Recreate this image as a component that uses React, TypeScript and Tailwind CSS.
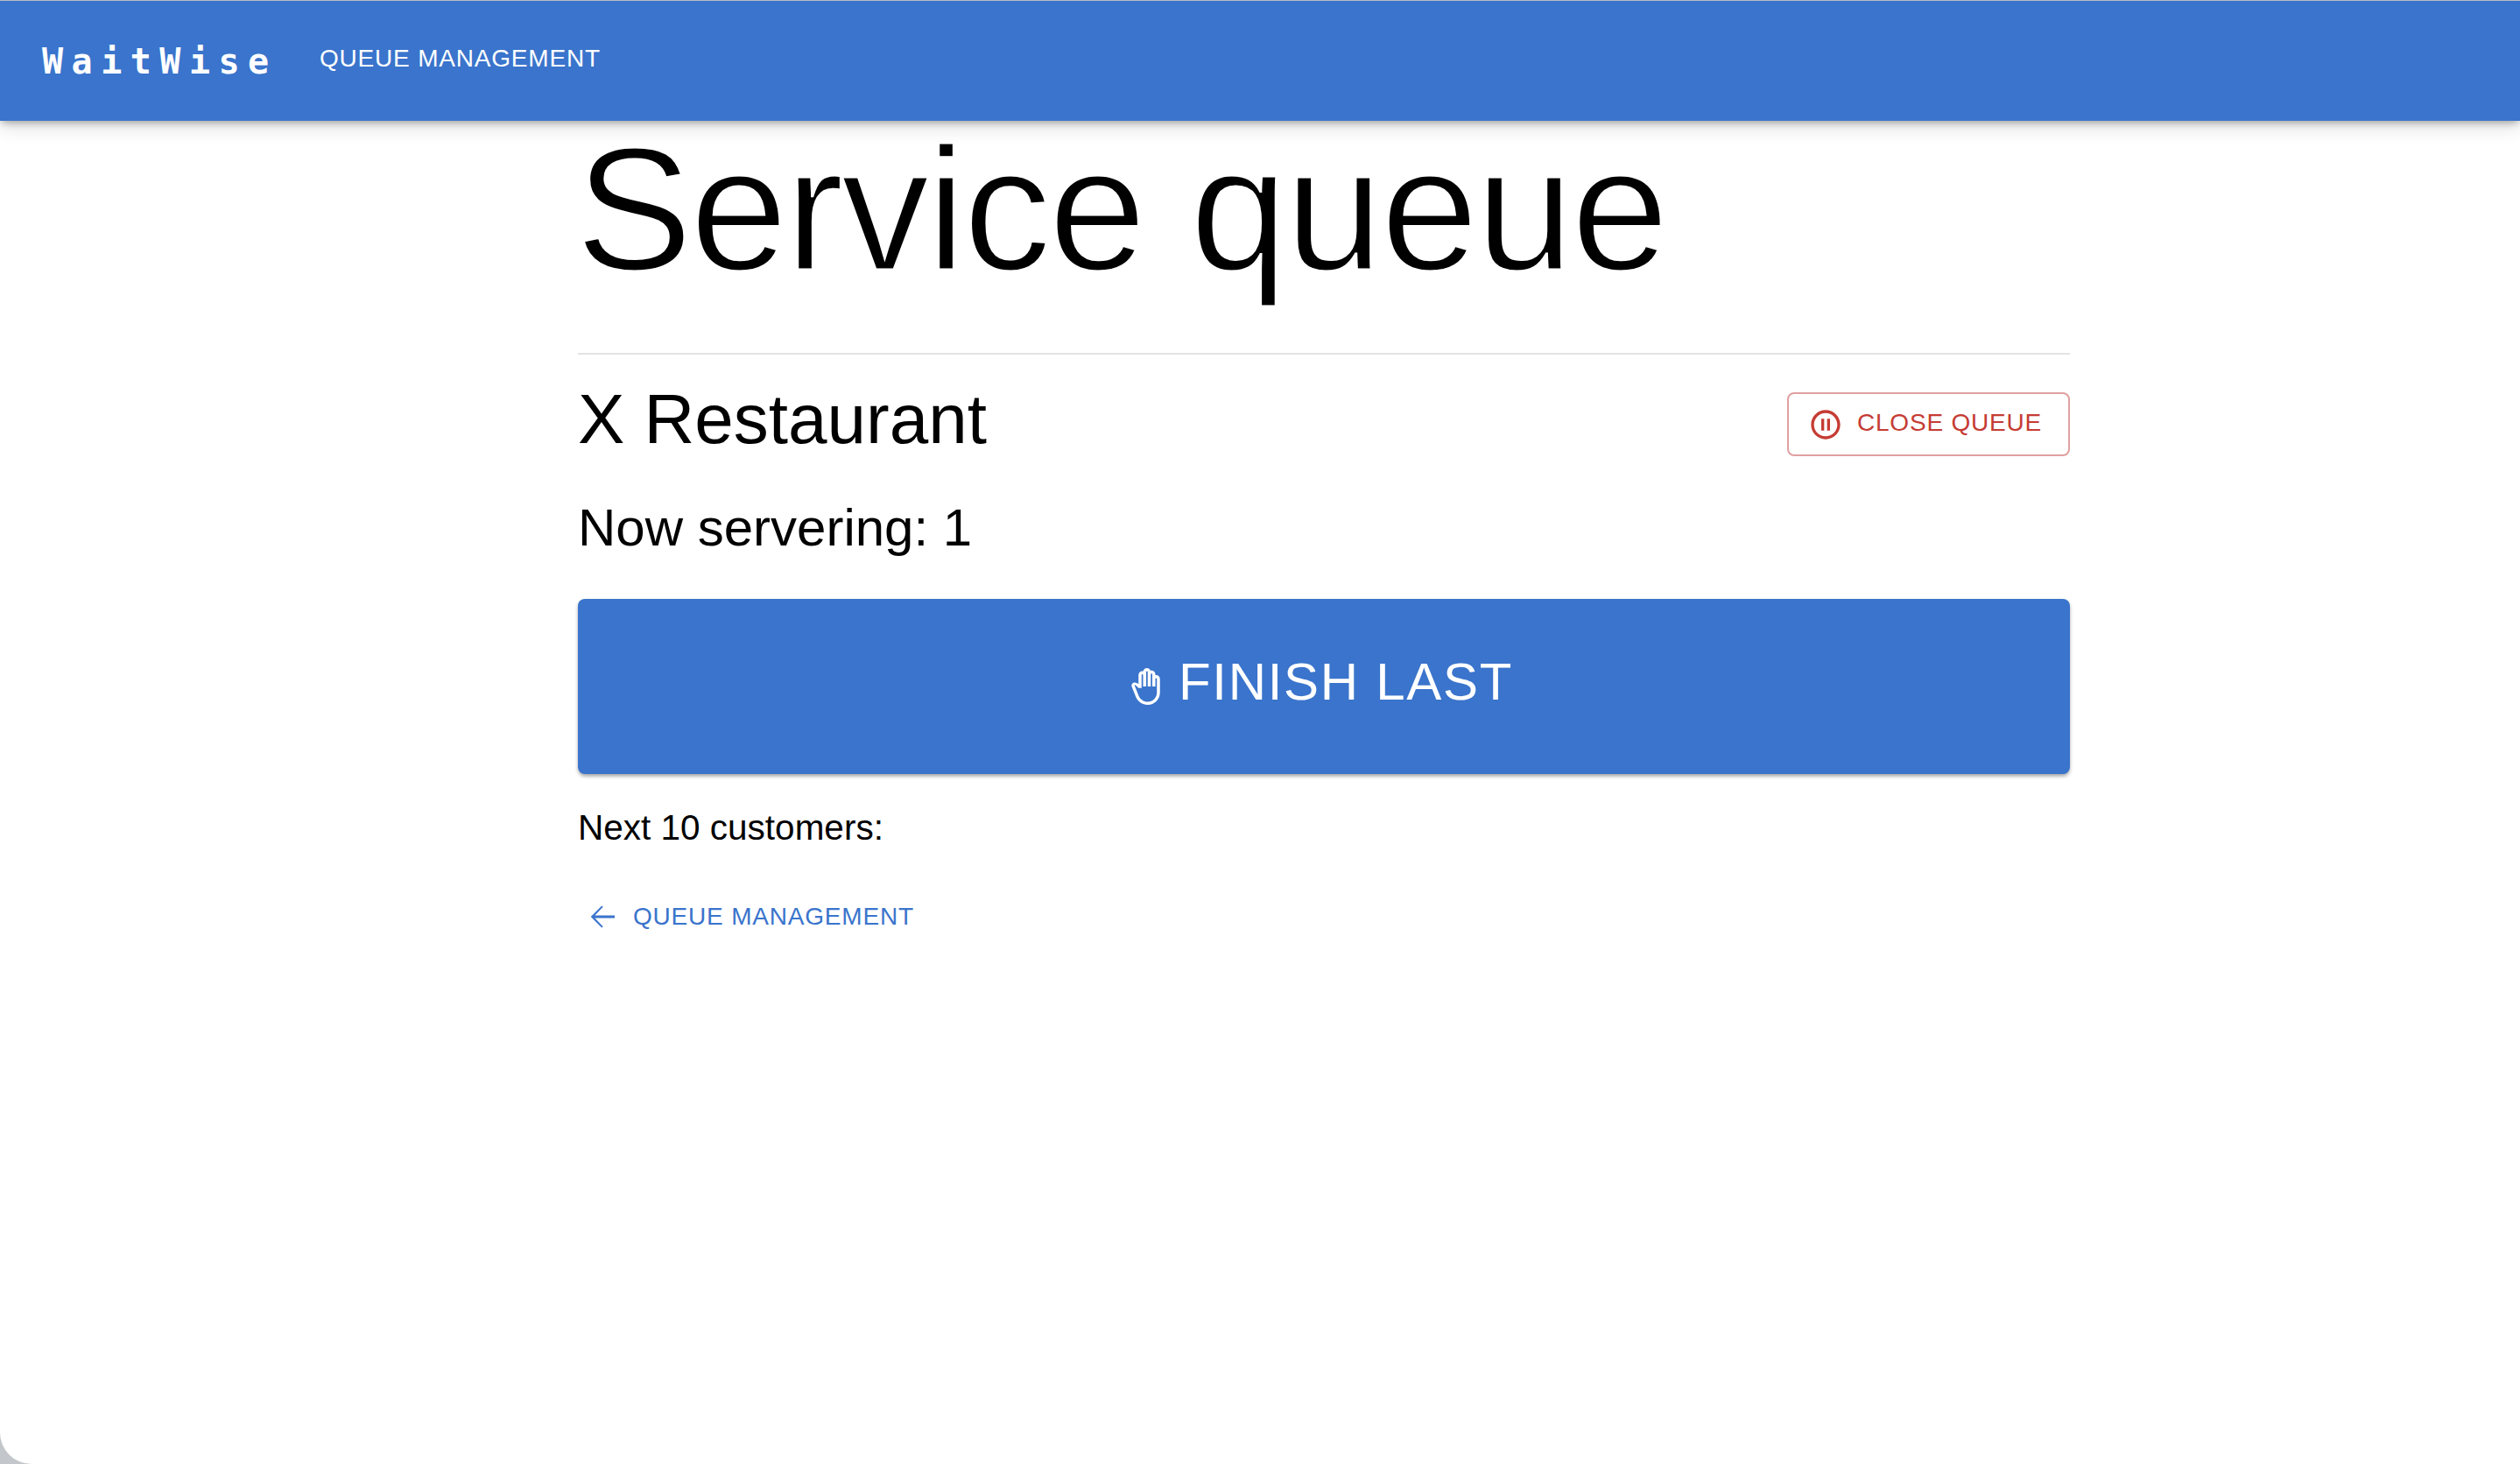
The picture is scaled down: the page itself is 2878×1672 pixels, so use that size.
const SANS = "font-['Liberation_Sans',Arial,sans-serif]";

function PauseCircle() {
  return (
    <svg viewBox="0 0 24 24" className="w-10 h-10 fill-current">
      <path d="M9 16h2V8H9v8zm3-14C6.48 2 2 6.48 2 12s4.48 10 10 10 10-4.48 10-10S17.52 2 12 2zm0 18c-4.41 0-8-3.59-8-8s3.59-8 8-8 8 3.59 8 8-3.59 8-8 8zm1-4h2V8h-2v8z" />
    </svg>
  );
}

function PanTool() {
  return (
    <svg viewBox="0 0 24 24" className="w-[42px] h-[42px] fill-current">
      <path d="M21 7c0-1.38-1.12-2.5-2.5-2.5-.17 0-.34.02-.5.05V4c0-1.38-1.12-2.5-2.5-2.5-.23 0-.46.03-.67.09C14.46.66 13.56 0 12.5 0c-1.23 0-2.25.89-2.46 2.06C9.87 2.02 9.69 2 9.5 2 8.12 2 7 3.12 7 4.5v5.89c-.34-.31-.76-.54-1.22-.66L5 9.52c-.83-.23-1.7.09-2.19.83-.38.57-.4 1.31-.15 1.95l2.56 6.43C6.49 21.91 9.57 24 13 24c4.42 0 8-3.58 8-8V7zm-2 9c0 3.31-2.69 6-6 6-2.61 0-4.95-1.59-5.91-4.01l-2.6-6.54c-.08-.2.06-.39.25-.45.13-.04.28.02.35.14L7 13h2V4.5c0-.28.22-.5.5-.5s.5.22.5.5V12h2V2.5c0-.28.22-.5.5-.5s.5.22.5.5V12h2V4c0-.28.22-.5.5-.5s.5.22.5.5v8h2V7c0-.28.22-.5.5-.5s.5.22.5.5v9z" />
    </svg>
  );
}

function ArrowBack() {
  return (
    <svg viewBox="0 0 24 24" className="w-[42px] h-[42px] fill-current">
      <path d="M20 11.2H7.1l5.3-5.6L11.6 4.8 4.4 12l7.2 7.2.8-.8-5.3-5.6H20v-1.6z" />
    </svg>
  );
}

export default function App() {
  return (
    <div className={"h-screen overflow-hidden bg-[#c3c6ca] " + SANS}>
      <div className="h-full bg-white rounded-bl-[36px] overflow-hidden">
        <header className="h-[138px] border-t border-[#b9bcc2] bg-[#3a74cc] text-white flex items-center px-12 shadow-[0_4px_8px_-2px_rgba(0,0,0,0.3),0_8px_20px_0_rgba(0,0,0,0.12)] relative">
          <span className="font-['DejaVu_Sans_Mono',monospace] font-bold text-[40px] tracking-[9.5px] w-[317px] shrink-0">WaitWise</span>
          <span className="text-[28px] tracking-[0.8px] -mt-[6px]">QUEUE MANAGEMENT</span>
        </header>
        <main className="w-[1704px] ml-[660px] text-black">
          <h1 className="text-[201px] tracking-[-3px] leading-none h-[265px] -ml-[3px] [-webkit-text-stroke:3px_white]">Service queue</h1>
          <div className="border-t-2 border-[#e3e3e3]" />
          <div className="flex justify-between items-start">
            <h2 className="text-[80px] leading-[90px] mt-[29px]">X Restaurant</h2>
            <button className="mt-[43px] h-[73px] w-[323px] border-2 border-[#e0a0a0] rounded-[8px] text-[#c53c34] flex items-center justify-center gap-4 pr-[8px] text-[28px] tracking-[0.8px]">
              <PauseCircle />
              <span className="-mt-[3px]">CLOSE QUEUE</span>
            </button>
          </div>
          <p className="text-[60px] leading-[70px] mt-[44px]">Now servering: 1</p>
          <button className="mt-[46px] w-full h-[200px] rounded-[8px] bg-[#3a74cc] text-white flex items-center justify-center gap-4 pr-[8px] text-[60px] tracking-[1.7px] shadow-[0_3px_4px_-1px_rgba(0,0,0,0.3),0_2px_5px_0_rgba(0,0,0,0.14)]">
            <PanTool />
            <span className="-mt-[10px]">FINISH LAST</span>
          </button>
          <p className="text-[40.5px] leading-[50px] mt-[36px]">Next 10 customers:</p>
          <button className="mt-[56px] flex items-center gap-[14px] pl-[7px] text-[#3a74cc] text-[28px] tracking-[0.8px]">
            <ArrowBack />
            <span>QUEUE MANAGEMENT</span>
          </button>
        </main>
      </div>
    </div>
  );
}
